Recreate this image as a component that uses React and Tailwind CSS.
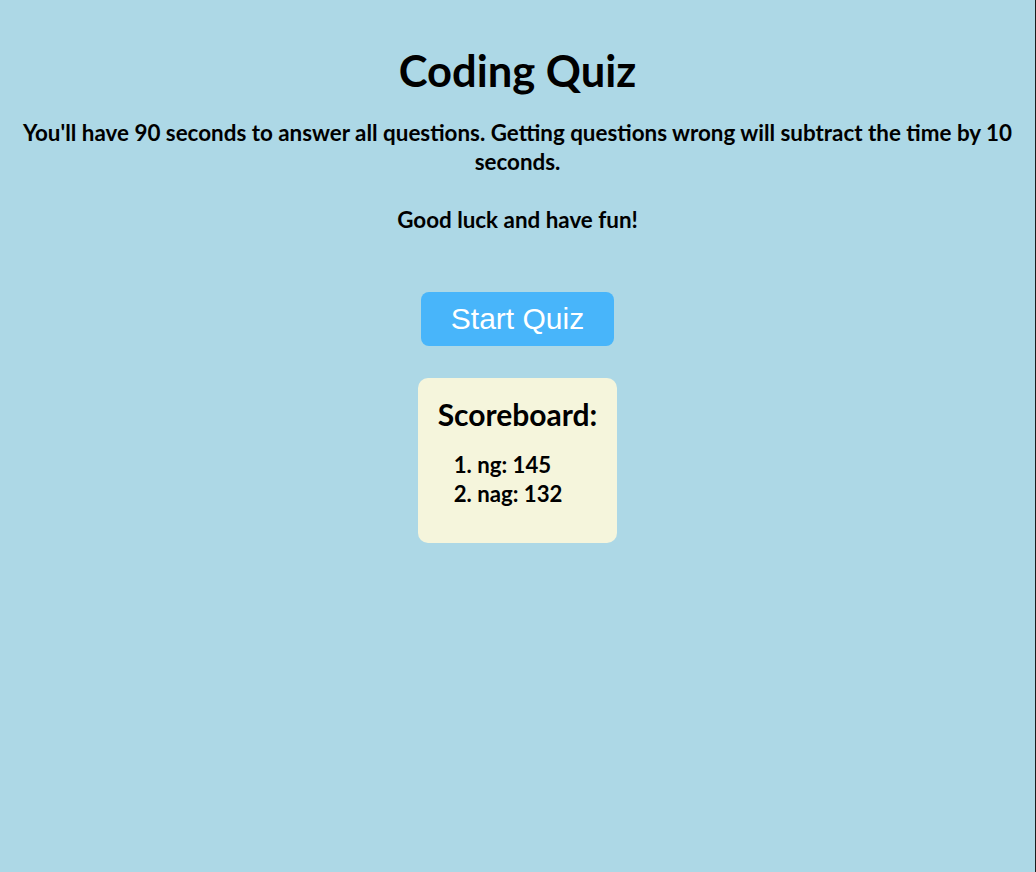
import React from "react";

const scores = [
  { name: "ng", score: 145 },
  { name: "nag", score: 132 },
];

export default function App() {
  return (
    <div className="min-h-screen w-full bg-[#add8e6] border-r border-[#1c1c1c] font-['Lato',sans-serif] font-bold text-black">
      <div className="flex flex-col items-center px-4 pt-[41px] text-center">
        <h1 className="text-[43.5px] leading-[58px]">Coding Quiz</h1>
        <p className="mt-[19px] text-[22.4px] leading-[29px]">
          You'll have 90 seconds to answer all questions. Getting questions wrong will subtract the time by 10 seconds.
          <br />
          <br />
          Good luck and have fun!
        </p>

        <button className="mt-[58px] rounded-lg bg-[#48b5fa] px-[30px] py-[10px] font-['Liberation_Sans',Arial,sans-serif] text-[30px] font-normal leading-[34px] text-white">
          Start Quiz
        </button>

        <div className="mt-8 rounded-[10px] bg-[#f5f5dc] px-5 pt-[17px] pb-[35px] text-left">
          <h2 className="text-[30px] leading-[39px]">Scoreboard:</h2>
          <ol className="mt-4 list-inside list-decimal pl-4 text-[22.2px] leading-[29px]">
            {scores.map((s) => (
              <li key={s.name}>
                {s.name}: {s.score}
              </li>
            ))}
          </ol>
        </div>
      </div>
    </div>
  );
}
